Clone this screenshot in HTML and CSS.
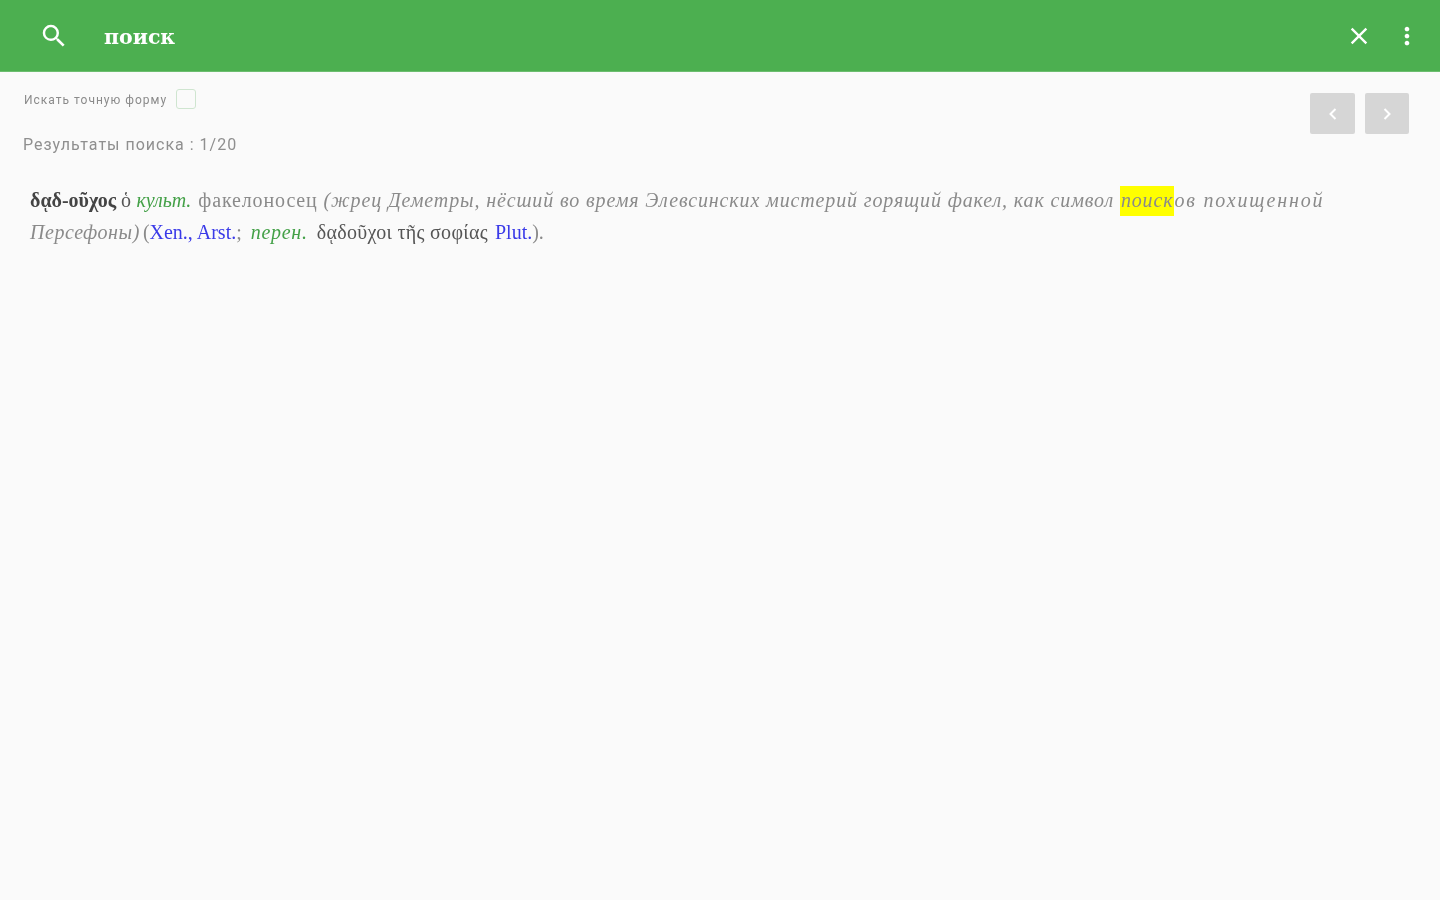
FILE: index.html
```html
<!DOCTYPE html>
<html lang="ru">
<head>
<meta charset="utf-8">
<title>Поиск</title>
<link rel="stylesheet" href="styles.css">
</head>
<body>
<header class="appbar">
  <svg class="icon-search" viewBox="0 0 24 24" width="30" height="30"><path fill="#fff" d="M15.5 14h-.79l-.28-.27A6.47 6.47 0 0 0 16 9.5 6.5 6.5 0 1 0 9.5 16c1.61 0 3.09-.59 4.23-1.57l.27.28v.79l5 4.99L20.49 19l-4.99-5zm-6 0C7.01 14 5 11.99 5 9.5S7.01 5 9.5 5 14 7.01 14 9.5 11.99 14 9.5 14z"/></svg>
  <div class="query">поиск</div>
  <svg class="icon-close" viewBox="0 0 24 24" width="28" height="28"><path fill="#fff" d="M19 6.41 17.59 5 12 10.59 6.41 5 5 6.41 10.59 12 5 17.59 6.41 19 12 13.41 17.59 19 19 17.59 13.41 12z"/></svg>
  <svg class="icon-more" viewBox="0 0 24 24" width="28" height="28"><path fill="#fff" d="M12 8c1.1 0 2-.9 2-2s-.9-2-2-2-2 .9-2 2 .9 2 2 2zm0 2c-1.100 0-2 .9-2 2s.9 2 2 2 2-.9 2-2-.9-2-2-2zm0 6c-1.100 0-2 .9-2 2s.9 2 2 2 2-.9 2-2-.9-2-2-2z"/></svg>
</header>
<main class="content">
  <div class="toolbar">
    <div class="search-info">
      <label class="exact"><span>Искать точную форму</span><span class="checkbox"></span></label>
      <div class="results">Результаты поиска : 1/20</div>
    </div>
    <div class="pager">
      <button class="page-btn"><svg viewBox="0 0 24 24" width="24" height="24"><path fill="none" stroke="#fff" stroke-width="2" d="M14.500 7l-5 5 5 5"/></svg></button>
      <button class="page-btn"><svg viewBox="0 0 24 24" width="24" height="24"><path fill="none" stroke="#fff" stroke-width="2" d="M9.500 7l5 5-5 5"/></svg></button>
    </div>
  </div>
  <p class="entry"><b class="head">δᾳδ-οῦχος</b> <span class="dark">ὁ</span> <i class="label">культ.</i> <span class="ru">факелоносец <i>(жрец Деметры, нёсший во время Элевсинских мистерий горящий факел, как символ <mark>поиск</mark><span class="tail">ов похищенной</span> <span class="persona">Персефоны)</span></i></span> <span class="paren">(</span><span class="ref">Xen., Arst.</span>; <i class="label label-wide">перен.</i> <span class="dark greek">δᾳδοῦχοι τῆς σοφίας</span> <span class="ref plut">Plut.</span>).</p>
</main>
</body>
</html>
```
FILE: styles.css
```css
html, body { margin: 0; height: 100%; }
body {
  background: #fafafa;
  font-family: "Liberation Serif", serif;
  overflow: hidden;
}
.appbar {
  height: 71px;
  background: #4caf50;
  border-bottom: 1px solid #6cbd6f;
  display: flex;
  align-items: center;
  padding: 0 19px 0 39px;
  color: #fff;
  filter: blur(0.6px);
}
.query {
  margin-left: 35px;
  padding-top: 2px;
  flex: 1;
  font-family: "DejaVu Serif", serif;
  font-size: 20.500px;
  font-weight: bold;
}
.icon-more { margin-left: 20px; }
.content { filter: blur(0.7px); }
.toolbar {
  display: flex;
  justify-content: space-between;
  padding: 16px 31px 0 24px;
}
.exact {
  display: flex;
  align-items: center;
  gap: 9px;
  height: 22px;
  font: 12px "Roboto", sans-serif;
  letter-spacing: 1px;
  color: #8a8a8a;
}
.exact span:first-child { padding-top: 2px; }
.checkbox {
  width: 18px;
  height: 18px;
  border: 1.500px solid #cfe5d0;
  border-radius: 3px;
}
.results {
  margin: 24px 0 0 -1px;
  font: 16px/22px "Roboto", sans-serif;
  letter-spacing: 1px;
  color: #8f8f8f;
}
.pager { display: flex; gap: 10px; margin-top: 5px; height: 41px; }
.page-btn {
  width: 45px;
  height: 41px;
  padding: 0;
  border: 0;
  border-radius: 2px;
  background: #d6d6d6;
  display: flex;
  align-items: center;
  justify-content: center;
}
.page-btn:last-child { width: 44px; }
.entry {
  margin: 28px 30px 0;
  font-size: 20px;
  line-height: 32px;
  color: #8a8a8a;
}
.ru { letter-spacing: 0.865px; margin-left: 2px; }
.tail { letter-spacing: 1.800px; }
.persona { letter-spacing: 0.550px; }
.head { color: #444; font-weight: bold; }
.dark { color: #555; letter-spacing: 0.3px; }
.label { color: #43a047; }
.label-wide { letter-spacing: 0.7px; margin-left: 4px; }
.paren { margin-left: -2px; }
.greek { margin-left: 4px; }
.plut { margin-left: 2px; }
.ref { color: #3a3ae8; }
mark { background: #ffff00; color: inherit; padding: 3px 1px 5px; }
```
